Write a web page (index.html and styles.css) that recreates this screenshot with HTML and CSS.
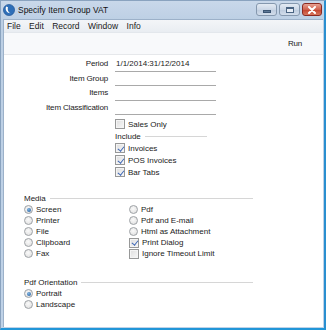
FILE: index.html
```html
<!DOCTYPE html>
<html>
<head>
<meta charset="utf-8">
<link rel="stylesheet" href="styles.css">
</head>
<body>
<div class="window">
  <div class="titlebar">
    <svg class="appicon" width="12" height="12" viewBox="0 0 12 12">
      <circle cx="6" cy="6" r="5.6" fill="#2e6fb8"/>
      <circle cx="6" cy="6" r="5.6" fill="none" stroke="#1b4f8f" stroke-width="0.6"/>
      <path d="M3.2 2.6 C1.8 5.2 3.4 9.4 7.8 9.2 C5.4 8.6 4.2 6 5 3.2 Z" fill="#ffffff"/>
    </svg>
    <span class="title">Specify Item Group VAT</span>
    <div class="winbtns">
      <div class="wbtn min"><span class="minbar"></span></div>
      <div class="wbtn max"><span class="maxbox"></span></div>
      <div class="wbtn close">
        <svg width="10" height="8" viewBox="0 0 10 8"><path d="M2 1 L8 7 M8 1 L2 7" stroke="#fff" stroke-width="2" stroke-linecap="round"/></svg>
      </div>
    </div>
  </div>
  <div class="panel">
    <div class="menubar">
      <span>File</span><span>Edit</span><span>Record</span><span>Window</span><span>Info</span>
    </div>
    <div class="toolbar"><span class="run">Run</span></div>
    <div class="content">
      <div class="form">
        <div class="lbl">Period</div><div class="fld">1/1/2014:31/12/2014</div>
        <div class="lbl">Item Group</div><div class="fld"></div>
        <div class="lbl">Items</div><div class="fld"></div>
        <div class="lbl">Item Classification</div><div class="fld"></div>
      </div>
      <div class="checks">
        <div class="row12 sales"><span class="cb"></span>Sales Only</div>
        <div class="row12 hdr inc"><span>Include</span><span class="rule"></span></div>
        <div class="row12"><span class="cb on"></span>Invoices</div>
        <div class="row12"><span class="cb on"></span>POS Invoices</div>
        <div class="row12"><span class="cb on"></span>Bar Tabs</div>
      </div>
      <div class="section media">
        <div class="row12 hdr"><span>Media</span><span class="rule"></span></div>
        <div class="cols">
          <div class="col">
            <div class="row11"><span class="rb on"></span>Screen</div>
            <div class="row11"><span class="rb"></span>Printer</div>
            <div class="row11"><span class="rb"></span>File</div>
            <div class="row11"><span class="rb"></span>Clipboard</div>
            <div class="row11"><span class="rb"></span>Fax</div>
          </div>
          <div class="col">
            <div class="row11"><span class="rb"></span>Pdf</div>
            <div class="row11"><span class="rb"></span>Pdf and E-mail</div>
            <div class="row11"><span class="rb"></span>Html as Attachment</div>
            <div class="row11"><span class="cb on"></span>Print Dialog</div>
            <div class="row11"><span class="cb"></span>Ignore Timeout Limit</div>
          </div>
        </div>
      </div>
      <div class="section orient">
        <div class="row12 hdr"><span>Pdf Orientation</span><span class="rule"></span></div>
        <div class="row11"><span class="rb on"></span>Portrait</div>
        <div class="row11"><span class="rb"></span>Landscape</div>
      </div>
    </div>
  </div>
</div>
</body>
</html>
```
FILE: styles.css
```css
* { box-sizing: border-box; }
html, body { margin: 0; padding: 0; }
body {
  width: 326px;
  height: 330px;
  overflow: hidden;
  font-family: "Liberation Sans", Arial, sans-serif;
  font-size: 8px;
  color: #1a1a1a;
}
.window {
  width: 326px;
  height: 330px;
  display: flex;
  flex-direction: column;
  background: linear-gradient(#c9d8ea, #bccfe4 20px, #bfd2e7);
  border: 1px solid #8aa3bf;
  border-right-color: #2a8fd0;
  border-bottom: 2px solid #2196d8;
  border-right-width: 2px;
}
.titlebar {
  height: 17px;
  flex: none;
  display: flex;
  align-items: center;
  padding-left: 2px;
  position: relative;
}
.appicon { flex: none; }
.title {
  margin-left: 3px;
  font-size: 8.4px;
  color: #111;
  letter-spacing: 0.05px;
}
.winbtns {
  position: absolute;
  right: 2px;
  top: 2px;
  display: flex;
  gap: 2px;
}
.wbtn {
  width: 21px;
  height: 13px;
  border-radius: 3px;
  border: 1px solid #8598ae;
  background: linear-gradient(#e3eaf3, #cbd7e6 50%, #bccbdd 51%, #d2ddeb);
  display: flex;
  align-items: center;
  justify-content: center;
}
.wbtn.close {
  width: 20px;
  border-color: #8a2a22;
  background: linear-gradient(#e8a293, #d0614e 50%, #c2412c 51%, #d7765d);
}
.minbar {
  width: 8px;
  height: 3px;
  background: #5d7896;
  border: 1px solid #3b5573;
  margin-top: 3px;
}
.maxbox {
  width: 8px;
  height: 6px;
  border: 1px solid #4a6482;
  border-top-width: 2px;
  background: #e8eef6;
}
.panel {
  flex: 1;
  margin: 1px 1px 1px 2px;
  background: #ffffff;
  display: flex;
  flex-direction: column;
  border: 1px solid #9cb1c9;
  border-bottom: none;
  border-right: none;
}
.menubar {
  height: 12px;
  flex: none;
  background: linear-gradient(#f3f5f8, #e9edf2);
  display: flex;
  align-items: center;
  padding-left: 3px;
  font-size: 8.5px;
}
.menubar span { margin-right: 8.4px; }
.toolbar {
  height: 23px;
  flex: none;
  background: #f8f9fb;
  border-top: 1px solid #e3e7ec;
  border-bottom: 1px solid #e6e8eb;
  display: flex;
  align-items: center;
  justify-content: flex-end;
  padding-right: 21px;
}
.run { font-size: 8px; letter-spacing: -0.2px; }
.content {
  flex: 1;
  background: #ffffff;
  display: flex;
  flex-direction: column;
  padding-top: 2px;
}
.form {
  display: grid;
  grid-template-columns: 104px 101px;
  grid-auto-rows: 14.5px;
  column-gap: 7px;
}
.lbl {
  text-align: right;
  line-height: 14.5px;
  letter-spacing: -0.15px;
}
.fld {
  border-bottom: 1px solid #a9a9a9;
  line-height: 13px;
  padding-left: 1px;
}
.checks {
  margin-left: 111px;
  margin-top: 3px;
  display: flex;
  flex-direction: column;
}
.row12 {
  height: 12px;
  display: flex;
  align-items: center;
}
.row11 {
  height: 11px;
  display: flex;
  align-items: center;
}
.hdr .rule {
  flex: 1;
  height: 1px;
  background: #d6d6d6;
  margin-left: 4px;
  margin-top: 1px;
}
.inc { width: 92px; }
.cb {
  width: 10px;
  height: 10px;
  border: 1px solid #979898;
  background: linear-gradient(135deg, #dedede, #f7f7f7);
  box-shadow: inset 0 0 0 1px #f4f4f4;
  margin-right: 3px;
  flex: none;
  position: relative;
}
.cb.on::after {
  content: "";
  position: absolute;
  left: 2.5px;
  top: 0.5px;
  width: 2.5px;
  height: 5px;
  border: solid #3a64b4;
  border-width: 0 1.4px 1.4px 0;
  transform: rotate(38deg);
}
.rb {
  width: 9px;
  height: 9px;
  border-radius: 50%;
  border: 1px solid #9ea2a6;
  background: radial-gradient(circle at 45% 40%, #fafafa, #dcdcdc);
  margin-right: 3px;
  flex: none;
  position: relative;
}
.rb.on::after {
  content: "";
  position: absolute;
  left: 1.5px;
  top: 1.5px;
  width: 4px;
  height: 4px;
  border-radius: 50%;
  background: radial-gradient(circle at 40% 35%, #7fb2e0, #1d5a9c);
}
.section {
  margin-left: 20px;
  width: 229px;
}
.media { margin-top: 14px; }
.cols { display: flex; }
.col {
  display: flex;
  flex-direction: column;
}
.col:first-child { width: 105px; }
.orient { margin-top: 17px; }
```
